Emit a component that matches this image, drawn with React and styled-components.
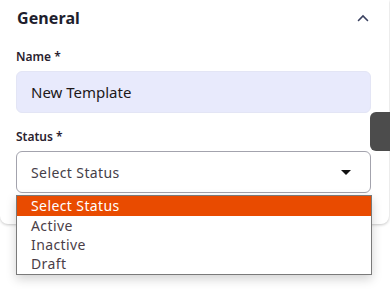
import React from "react";
import { useState } from "react";
import styled, { createGlobalStyle } from "styled-components";

const GlobalStyle = createGlobalStyle`
  body {
    margin: 0;
    background: #fff;
    font-family: "Noto Sans", "Open Sans", sans-serif;
  }
`;

const Page = styled.div`
  position: relative;
  width: 390px;
  height: 296px;
  overflow: hidden;
  background: #fff;
`;

const Card = styled.section`
  position: relative;
  width: 389px;
  box-sizing: border-box;
  height: 224px;
  padding: 6px 18px 0 16px;
  background: #fff;
  border-radius: 0 0 8px 8px;
  box-shadow: 0 1px 3px rgba(0, 0, 0, 0.22);
`;

const Header = styled.div`
  display: flex;
  align-items: center;
  justify-content: space-between;
  height: 24px;
`;

const Title = styled.h2`
  margin: 0 0 0 1px;
  font-size: 16px;
  font-weight: 700;
  color: #1e1e2d;
  letter-spacing: 0.1px;
`;

const Toggle = styled.button`
  display: flex;
  align-items: center;
  justify-content: center;
  width: 20px;
  height: 20px;
  padding: 0;
  margin-right: -2px;
  border: none;
  background: none;
`;

const Field = styled.div`
  display: flex;
  flex-direction: column;
  margin-top: ${(p) => p.$top}px;
`;

const Label = styled.label`
  font-size: 12px;
  font-weight: 600;
  color: #2a2230;
  line-height: 16px;
  margin-bottom: 6px;
`;

const TextInput = styled.input`
  box-sizing: border-box;
  height: 42px;
  padding: 0 14px;
  border: 1px solid #e3e5f5;
  border-radius: 6px;
  background: #e8eafc;
  font-family: inherit;
  font-size: 15px;
  color: #201818;
  outline: none;
`;

const SelectBox = styled.div`
  box-sizing: border-box;
  display: flex;
  align-items: center;
  justify-content: space-between;
  height: 42px;
  padding: 0 15px 0 14px;
  border: 1px solid #a3a3ad;
  border-radius: 6px;
  background: #fff;
  font-size: 14px;
  letter-spacing: 0.4px;
  color: #454048;
  cursor: pointer;
`;

const Caret = styled.span`
  width: 0;
  height: 0;
  margin-right: 4px;
  border-left: 5px solid transparent;
  border-right: 5px solid transparent;
  border-top: 5px solid #111;
`;

const Tab = styled.div`
  position: absolute;
  top: 112px;
  right: 0;
  width: 20px;
  height: 39px;
  background: #4c4c4c;
  border-radius: 6px 0 0 6px;
`;

const Options = styled.ul`
  position: absolute;
  top: 195px;
  left: 16px;
  width: 356px;
  box-sizing: border-box;
  margin: 0;
  padding: 0 0 1px;
  list-style: none;
  background: #fff;
  border: 1px solid #7a7a7a;
  box-shadow: 0 4px 10px rgba(0, 0, 0, 0.18);
`;

const Option = styled.li`
  height: ${(p) => (p.$first ? 20 : 19)}px;
  line-height: ${(p) => (p.$first ? 20 : 19)}px;
  padding-left: 14px;
  font-size: 14px;
  letter-spacing: 0.4px;
  color: ${(p) => (p.$active ? "#fff" : "#4a3e48")};
  background: ${(p) => (p.$active ? "#e94b00" : "transparent")};
`;

const statuses = ["Select Status", "Active", "Inactive", "Draft"];

function App() {
  const [name, setName] = useState("New Template");
  const [selected] = useState(0);

  return (
    <Page>
      <GlobalStyle />
      <Card>
        <Header>
          <Title>General</Title>
          <Toggle aria-label="Collapse">
            <svg width="12" height="8" viewBox="0 0 12 8">
              <path
                d="M1.5 6.5 L6 2 L10.5 6.5"
                fill="none"
                stroke="#3a4160"
                strokeWidth="1.6"
                strokeLinecap="round"
              />
            </svg>
          </Toggle>
        </Header>
        <Field $top={19}>
          <Label>Name *</Label>
          <TextInput value={name} onChange={(e) => setName(e.target.value)} />
        </Field>
        <Field $top={16}>
          <Label>Status *</Label>
          <SelectBox>
            <span>{statuses[selected]}</span>
            <Caret />
          </SelectBox>
        </Field>
      </Card>
      <Tab />
      <Options>
        {statuses.map((s, i) => (
          <Option key={s} $first={i === 0} $active={i === selected}>
            {s}
          </Option>
        ))}
      </Options>
    </Page>
  );
}

export default App;
